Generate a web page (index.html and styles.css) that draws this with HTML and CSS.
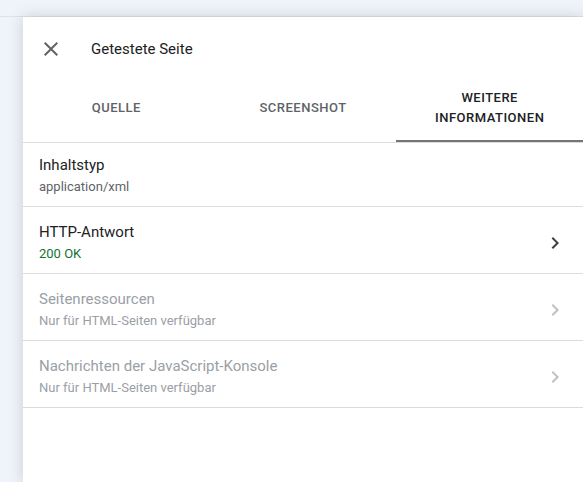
FILE: index.html
```html
<!DOCTYPE html>
<html lang="de">
<head>
    <meta charset="UTF-8">
    <meta name="viewport" content="width=device-width, initial-scale=1.0">
    <title>Getestete Seite</title>
    <link rel="stylesheet" href="styles.css">
</head>
<body>
    <div class="topbar"></div>
    <div class="stage">
        <div class="panel">
            <div class="panel-header">
                <svg class="close-icon" viewBox="0 0 24 24" width="24" height="24">
                    <path d="M19 6.41L17.59 5 12 10.59 6.41 5 5 6.41 10.59 12 5 17.59 6.41 19 12 13.41 17.59 19 19 17.59 13.41 12z"/>
                </svg>
                <span class="panel-title">Getestete Seite</span>
            </div>
            <div class="tabs">
                <div class="tab">Quelle</div>
                <div class="tab">Screenshot</div>
                <div class="tab active">Weitere Informationen</div>
            </div>
            <div class="list">
                <div class="row first">
                    <div class="row-text">
                        <div class="row-title">Inhaltstyp</div>
                        <div class="row-sub">application/xml</div>
                    </div>
                </div>
                <div class="row">
                    <div class="row-text">
                        <div class="row-title">HTTP-Antwort</div>
                        <div class="row-sub ok">200 OK</div>
                    </div>
                    <svg class="chevron" viewBox="0 0 24 24" width="24" height="24"><path d="M10 6L8.59 7.41 13.17 12l-4.58 4.59L10 18l6-6z"/></svg>
                </div>
                <div class="row disabled">
                    <div class="row-text">
                        <div class="row-title">Seitenressourcen</div>
                        <div class="row-sub">Nur für HTML-Seiten verfügbar</div>
                    </div>
                    <svg class="chevron" viewBox="0 0 24 24" width="24" height="24"><path d="M10 6L8.59 7.41 13.17 12l-4.58 4.59L10 18l6-6z"/></svg>
                </div>
                <div class="row disabled">
                    <div class="row-text">
                        <div class="row-title">Nachrichten der JavaScript-Konsole</div>
                        <div class="row-sub">Nur für HTML-Seiten verfügbar</div>
                    </div>
                    <svg class="chevron" viewBox="0 0 24 24" width="24" height="24"><path d="M10 6L8.59 7.41 13.17 12l-4.58 4.59L10 18l6-6z"/></svg>
                </div>
            </div>
        </div>
    </div>
</body>
</html>
```
FILE: styles.css
```css
html, body {
    height: 100%;
}
body {
    margin: 0;
    font-family: Roboto, "Noto Sans", sans-serif;
    background: #eff3fa;
    color: #202124;
    display: flex;
    flex-direction: column;
    overflow: hidden;
}
.topbar {
    height: 16px;
    border-bottom: 1px solid #dde1e8;
}
.stage {
    flex: 1;
    display: flex;
    padding-left: 23px;
}
.panel {
    flex: 1;
    background: #fff;
    box-shadow: 0 0 14px rgba(60, 64, 67, 0.2);
}
.panel-header {
    height: 64px;
    display: flex;
    align-items: center;
    padding-left: 16px;
}
.close-icon {
    fill: #5f6368;
    margin-right: 28px;
}
.panel-title {
    font-size: 15px;
    color: #202124;
}
.tabs {
    display: flex;
    border-bottom: 1px solid #dadce0;
}
.tab {
    flex: 1;
    height: 53px;
    padding: 0 24px 8px;
    display: flex;
    align-items: center;
    justify-content: center;
    text-align: center;
    text-transform: uppercase;
    font-size: 13px;
    font-weight: 500;
    letter-spacing: 0.5px;
    line-height: 20px;
    color: #5f6368;
}
.tab.active {
    color: #202124;
    box-shadow: inset 0 -2px 0 #757575;
}
.row {
    display: flex;
    align-items: center;
    padding: 15px 16px 9px;
    border-bottom: 1px solid #dadce0;
}
.row.first {
    padding-top: 12px;
}
.row-text {
    flex: 1;
}
.row-title {
    font-size: 15px;
    line-height: 20px;
    color: #202124;
}
.row-sub {
    margin-top: 2px;
    font-size: 13px;
    line-height: 20px;
    color: #5f6368;
}
.row-sub.ok {
    color: #137333;
}
.chevron {
    fill: #3c4043;
}
.disabled .row-title,
.disabled .row-sub {
    color: #9aa0a6;
}
.disabled .chevron {
    fill: #bdc1c6;
}
```
